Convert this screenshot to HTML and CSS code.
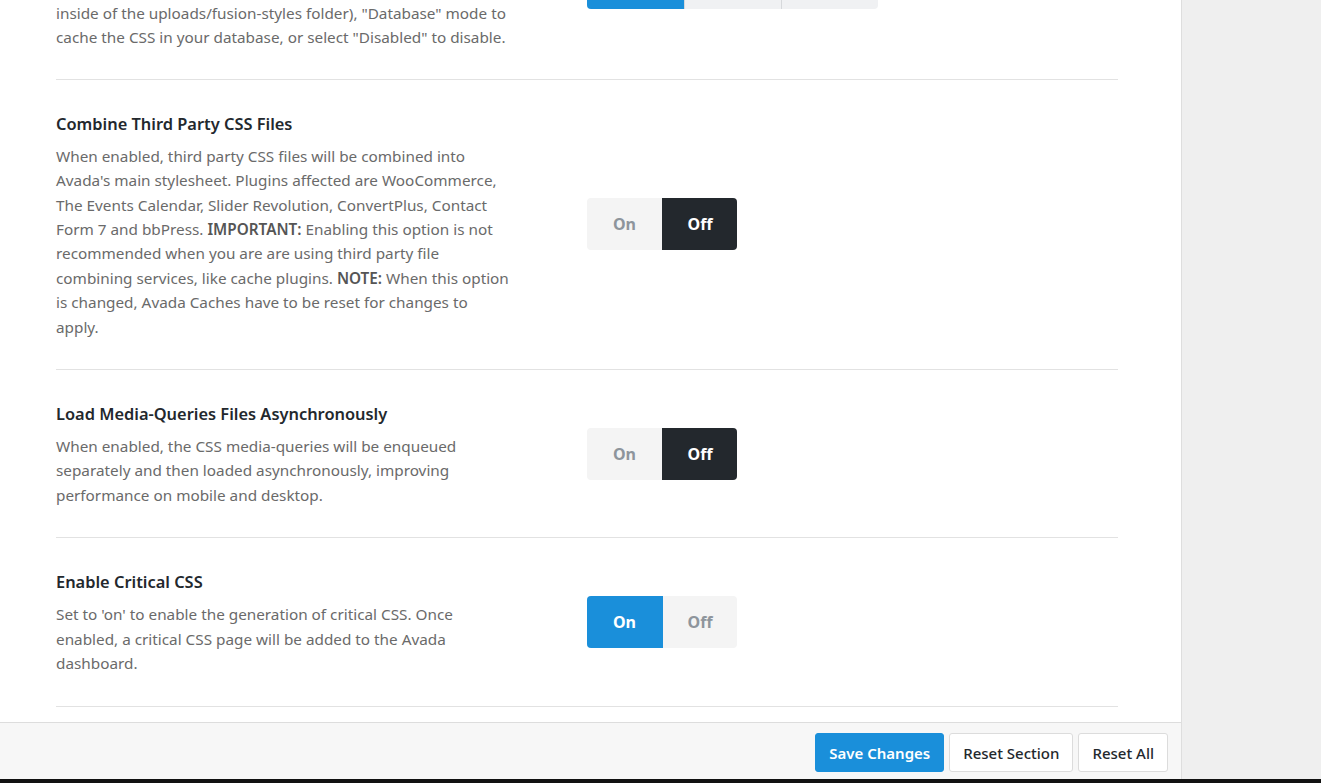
FILE: index.html
```html
<!DOCTYPE html>
<html lang="en">
<head>
<meta charset="utf-8">
<title>Avada Options</title>
<link rel="stylesheet" href="styles.css">
</head>
<body>
<div class="screen">
  <div class="panel">
    <div class="scroll">
      <div class="rows">
        <div class="row row-partial">
          <div class="info">
            <p class="desc">inside of the uploads/fusion-styles folder), "Database" mode to cache the CSS in your database, or select "Disabled" to disable.</p>
          </div>
          <div class="control">
            <div class="seg seg-three">
              <span class="seg-btn is-blue">File</span>
              <span class="seg-btn">Database</span>
              <span class="seg-btn">Disabled</span>
            </div>
          </div>
        </div>

        <div class="row">
          <div class="info">
            <h3 class="title">Combine Third Party CSS Files</h3>
            <p class="desc">When enabled, third party CSS files will be combined into Avada's main stylesheet. Plugins affected are WooCommerce, The Events Calendar, Slider Revolution, ConvertPlus, Contact Form 7 and bbPress. <strong>IMPORTANT:</strong> Enabling this option is not recommended when you are are using third party file combining services, like cache plugins. <strong>NOTE:</strong> When this option is changed, Avada Caches have to be reset for changes to apply.</p>
          </div>
          <div class="control">
            <div class="seg">
              <span class="seg-btn">On</span>
              <span class="seg-btn is-dark">Off</span>
            </div>
          </div>
        </div>

        <div class="row">
          <div class="info">
            <h3 class="title">Load Media-Queries Files Asynchronously</h3>
            <p class="desc">When enabled, the CSS media-queries will be enqueued separately and then loaded asynchronously, improving performance on mobile and desktop.</p>
          </div>
          <div class="control">
            <div class="seg">
              <span class="seg-btn">On</span>
              <span class="seg-btn is-dark">Off</span>
            </div>
          </div>
        </div>

        <div class="row">
          <div class="info">
            <h3 class="title">Enable Critical CSS</h3>
            <p class="desc">Set to 'on' to enable the generation of critical CSS. Once enabled, a critical CSS page will be added to the Avada dashboard.</p>
          </div>
          <div class="control">
            <div class="seg">
              <span class="seg-btn is-blue">On</span>
              <span class="seg-btn">Off</span>
            </div>
          </div>
        </div>
      </div>
    </div>
    <div class="footer">
      <button class="btn btn-primary">Save Changes</button>
      <button class="btn">Reset Section</button>
      <button class="btn">Reset All</button>
    </div>
  </div>
  <div class="side"></div>
</div>
<div class="taskbar"></div>
</body>
</html>
```
FILE: styles.css
```css
* { box-sizing: border-box; }
html, body { margin: 0; padding: 0; height: 100%; overflow: hidden; }
body {
  background: #efefef;
  font-family: "Noto Sans", "Open Sans", sans-serif;
  color: #23282d;
}
.screen {
  display: flex;
  height: 779px;
}
.panel {
  width: 1182px;
  flex: none;
  background: #fff;
  border-right: 1px solid #dedede;
  display: flex;
  flex-direction: column;
}
.side { flex: 1; background: #efefef; }
.scroll {
  flex: 1;
  overflow: hidden;
}
.rows {
  padding: 0 63px 0 56px;
}
.row {
  display: flex;
  align-items: center;
  border-bottom: 1px solid #e2e2e2;
  padding: 31px 0 30px;
}
.row-partial {
  padding: 1px 0 29px;
  align-items: flex-start;
}
.info {
  width: 531px;
  flex: none;
}
.title {
  margin: 0 0 7px;
  font-size: 16.4px;
  line-height: 26px;
  font-weight: 600;
  color: #23282d;
}
.desc {
  margin: 0;
  width: 455px;
  font-size: 15.3px;
  line-height: 24.4px;
  color: #6a6a6a;
}
.desc strong { font-weight: 600; color: #555; }
.control { flex: 1; }
.seg {
  display: flex;
  width: max-content;
  height: 52px;
  margin-top: -1px;
  border-radius: 4px;
  overflow: hidden;
  background: #f4f4f4;
}
.seg-btn {
  width: 75px;
  display: flex;
  align-items: center;
  justify-content: center;
  font-size: 16px;
  font-weight: 700;
  color: #8e959c;
}
.seg-btn + .seg-btn { border-left: 1px solid #e6e6e6; }
.seg-btn.is-dark { background: #23282d; color: #fff; border-left-color: #23282d; }
.seg-btn.is-blue { background: #1a8fda; color: #fff; }
.seg-btn.is-blue + .seg-btn { border-left-color: #1a8fda; }
.seg-three {
  margin-top: -45px;
  height: 53px;
  background: #f0f1f3;
}
.seg-three .seg-btn { width: 97px; align-items: flex-start; padding-top: 2px; font-size: 14px; line-height: 18px; }
.seg-three .seg-btn + .seg-btn { border-left: 1px solid #d6d8db; }
.seg-three .seg-btn.is-blue + .seg-btn { border-left-color: #d6d8db; }
.footer {
  flex: none;
  height: 57px;
  border-top: 1px solid #dddddd;
  background: #f7f7f7;
  display: flex;
  justify-content: flex-end;
  align-items: flex-start;
  gap: 5px;
  padding: 10px 13px 0 0;
}
.btn {
  height: 39px;
  padding: 0 13px;
  font-family: "Noto Sans", "Open Sans", sans-serif;
  font-size: 15px;
  font-weight: 500;
  color: #23282d;
  background: #fff;
  border: 1px solid #dcdcdc;
  border-radius: 3px;
}
.btn-primary {
  background: #1a8fda;
  border-color: #1a8fda;
  color: #fff;
  font-weight: 600;
}
.taskbar { height: 4px; background: #111; }
```
